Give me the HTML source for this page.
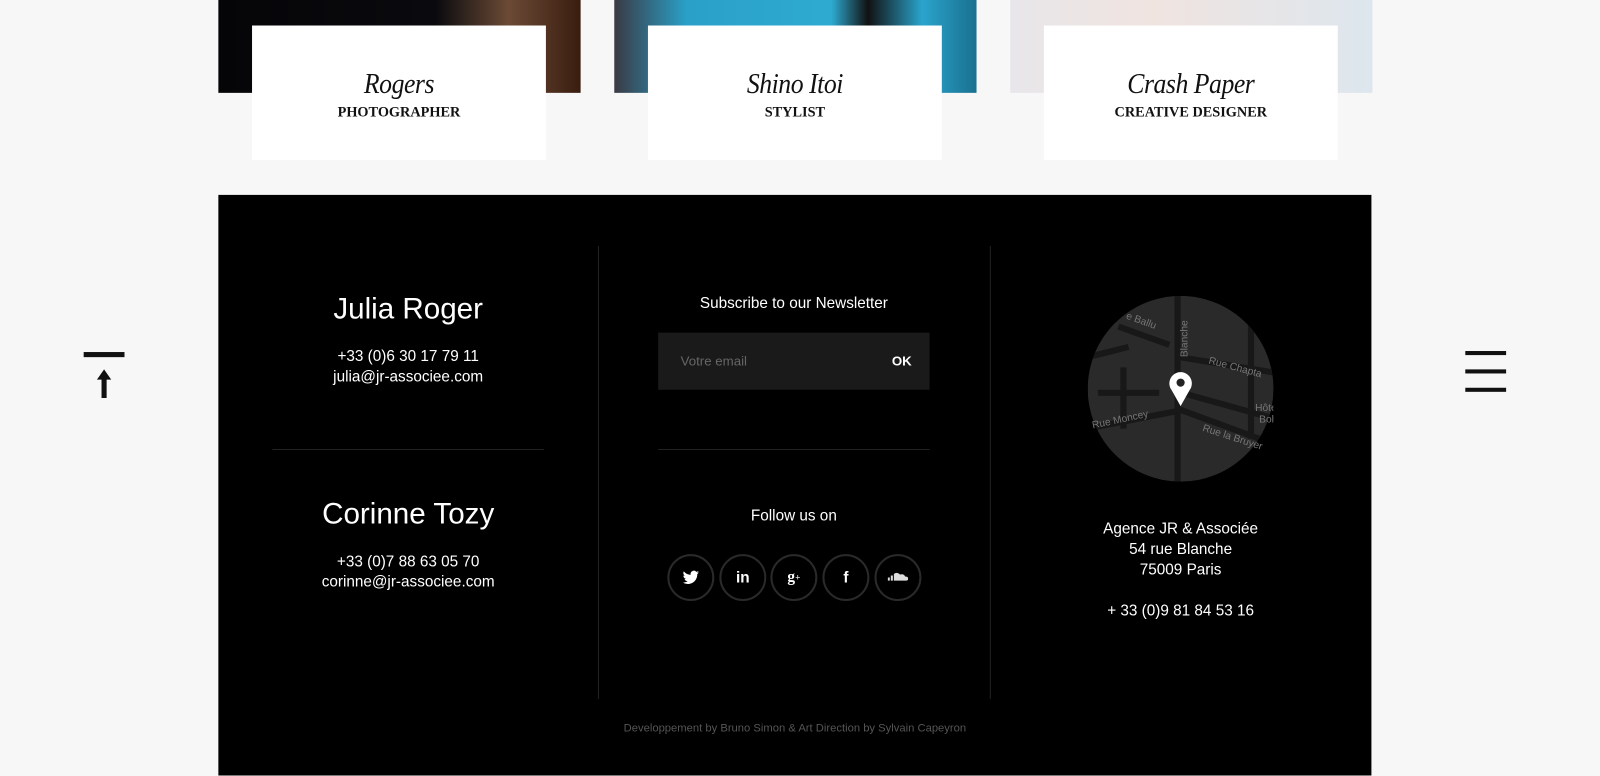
<!DOCTYPE html>
<html><head><meta charset="utf-8"><style>
*{margin:0;padding:0;box-sizing:border-box}
body{width:1600px;height:760px;background:#f7f7f7;position:relative;overflow:hidden;font-family:"Liberation Sans",sans-serif}
#w{position:absolute;left:0;top:0;width:1568px;height:745px;transform:scale(1.0204);transform-origin:0 0}
.a{position:absolute}
.img{top:0;height:91px;width:355px}
.card{top:25px;width:288px;height:132px;background:#fff;text-align:center;font-family:"Liberation Serif",serif;color:#111}
.card i{display:block;font-size:28px;margin-top:42px;letter-spacing:-0.5px;transform:scaleX(.9)}
.card b{display:block;font-size:14px;margin-top:4px}
.foot{left:214px;top:191px;width:1130px;height:569px;background:#000;color:#fff}
.t{text-align:center;color:#fff}
.ic{width:46px;height:46px;border:2px solid #2a2a2a;border-radius:50%;top:543px;display:flex;align-items:center;justify-content:center;font-weight:bold;font-size:15px;color:#fff}
</style></head><body><div id="w">
<div class="a img" style="left:214px;background:linear-gradient(90deg,#050508 0,#0a0a0e 60%,#6b4a35 80%,#3a1d10 100%)"></div>
<div class="a img" style="left:602px;background:linear-gradient(90deg,#3a3a44 0,#2aa0c8 20%,#2eaad0 60%,#111 70%,#2aa4cc 85%,#1a7090 100%)"></div>
<div class="a img" style="left:990px;background:linear-gradient(90deg,#e8e6ea,#f0e4e0 40%,#dde6ee 100%)"></div>
<div class="a card" style="left:247px"><i>Rogers</i><b>PHOTOGRAPHER</b></div>
<div class="a card" style="left:635px"><i>Shino Itoi</i><b>STYLIST</b></div>
<div class="a card" style="left:1023px"><i>Crash Paper</i><b>CREATIVE DESIGNER</b></div>

<div class="a" style="left:82px;top:345px;width:40px;height:5px;background:#111"></div>
<svg class="a" style="left:92px;top:360px" width="20" height="32"><path d="M10 2 L3 12 H7.5 V30 H12.5 V12 H17 Z" fill="#111"/></svg>
<div class="a" style="left:1436px;top:344px;width:40px;height:4px;background:#111"></div>
<div class="a" style="left:1436px;top:362px;width:40px;height:4px;background:#111"></div>
<div class="a" style="left:1436px;top:380px;width:40px;height:4px;background:#111"></div>

<div class="a foot"></div>
<div class="a" style="left:586px;top:241px;width:1px;height:444px;background:#222"></div>
<div class="a" style="left:970px;top:241px;width:1px;height:444px;background:#222"></div>
<div class="a" style="left:267px;top:440px;width:266px;height:1px;background:#222"></div>
<div class="a" style="left:645px;top:440px;width:266px;height:1px;background:#222"></div>

<div class="a t" style="left:267px;width:266px;top:287px;font-size:29px">Julia Roger</div>
<div class="a t" style="left:267px;width:266px;top:340px;font-size:15px;line-height:20px">+33 (0)6 30 17 79 11<br>julia@jr-associee.com</div>
<div class="a t" style="left:267px;width:266px;top:488px;font-size:29px">Corinne Tozy</div>
<div class="a t" style="left:267px;width:266px;top:541px;font-size:15px;line-height:20px">+33 (0)7 88 63 05 70<br>corinne@jr-associee.com</div>

<div class="a t" style="left:645px;width:266px;top:289px;font-size:15px">Subscribe to our Newsletter</div>
<div class="a" style="left:645px;top:326px;width:266px;height:56px;background:#1a1a1a"></div>
<div class="a" style="left:667px;top:346px;font-size:13px;color:#666">Votre email</div>
<div class="a" style="left:874px;top:346px;font-size:13px;color:#fff;font-weight:bold">OK</div>
<div class="a t" style="left:645px;width:266px;top:497px;font-size:15px">Follow us on</div>
<div class="a ic" style="left:654px"><svg width="16" height="14" viewBox="0 0 24 20"><path d="M24 2.4a10 10 0 0 1-2.8.8A5 5 0 0 0 23.3.4a10 10 0 0 1-3.1 1.2A4.9 4.9 0 0 0 11.8 6 14 14 0 0 1 1.7.9a4.9 4.9 0 0 0 1.5 6.6 5 5 0 0 1-2.2-.6 4.9 4.9 0 0 0 4 4.9 5 5 0 0 1-2.2.1 4.9 4.9 0 0 0 4.6 3.4A9.9 9.9 0 0 1 0 17.3 14 14 0 0 0 7.5 19.5c9.1 0 14-7.5 14-14v-.6A10 10 0 0 0 24 2.4z" fill="#fff"/></svg></div>
<div class="a ic" style="left:705px">in</div>
<div class="a ic" style="left:755px;font-family:'Liberation Serif',serif">g<sup style="font-size:9px">+</sup></div>
<div class="a ic" style="left:806px">f</div>
<div class="a ic" style="left:857px"><svg width="20" height="10"><path d="M0 8 V5 H2 V8 Z M3 8 V3 H5 V8 Z M6 8 V1.5 Q9 -1 12 2 Q16 1 17 4 Q20 4 20 6 Q20 8 18 8 Z" fill="#ddd"/></svg></div>

<svg class="a" style="left:1066px;top:290px" width="182" height="182"><defs><clipPath id="c"><circle cx="91" cy="91" r="91"/></clipPath></defs><circle cx="91" cy="91" r="91" fill="#2a2a2a"/><g clip-path="url(#c)" stroke="#181818" stroke-width="6" fill="none"><path d="M88 0 V182"/><path d="M0 130 L92 112 L182 145"/><path d="M92 95 L182 120"/><path d="M90 60 L182 75"/><path d="M30 30 L80 48"/><path d="M0 60 L40 50"/><path d="M35 70 V130"/><path d="M10 95 H70"/><path d="M160 20 V140"/></g><g font-size="10" fill="#777" font-family="Liberation Sans"><text x="37" y="22" transform="rotate(20 37 22)">e Ballu</text><text x="118" y="66" transform="rotate(15 118 66)">Rue Chapta</text><text x="5" y="130" transform="rotate(-12 5 130)">Rue Moncey</text><text x="112" y="132" transform="rotate(18 112 132)">Rue la Bruyer</text><text x="164" y="113">Hôtel V</text><text x="168" y="124">Bohè</text><text x="98" y="60" transform="rotate(-90 98 60)">Blanche</text></g><path d="M91 108 L82 92 A11 11 0 1 1 100 92 Z" fill="#fff"/><circle cx="91" cy="85" r="4" fill="#222"/></svg>
<div class="a t" style="left:1030px;width:254px;top:509px;font-size:15px;line-height:20px">Agence JR &amp; Associée<br>54 rue Blanche<br>75009 Paris<br><br>+ 33 (0)9 81 84 53 16</div>

<div class="a t" style="left:214px;width:1130px;top:708px;font-size:11px;color:#555">Developpement by Bruno Simon &amp; Art Direction by Sylvain Capeyron</div>
</div></body></html>
